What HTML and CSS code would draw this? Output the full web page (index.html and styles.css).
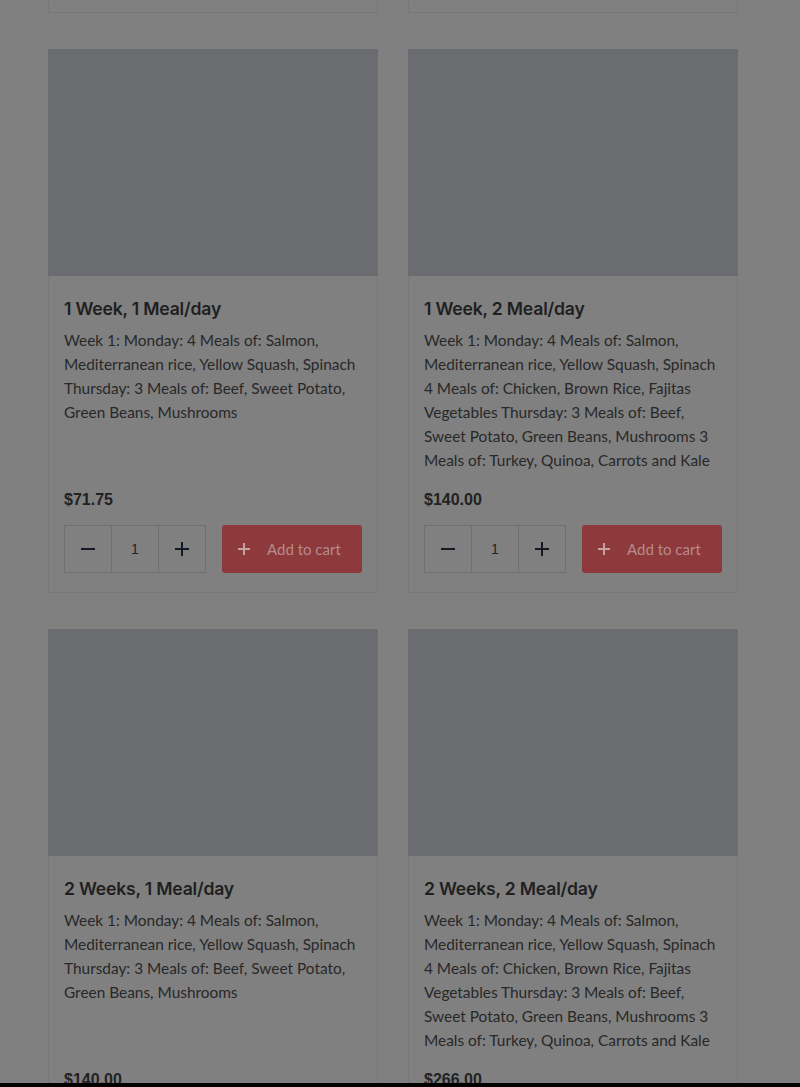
FILE: index.html
```html
<!DOCTYPE html>
<html lang="en">
<head>
<meta charset="utf-8">
<title>Meal plans</title>
<link rel="stylesheet" href="styles.css">
</head>
<body>
<main class="grid">
  <article class="card card-top"></article>
  <article class="card card-top"></article>

  <article class="card">
    <div class="thumb"></div>
    <div class="body">
      <h2 class="title">1 Week, 1 Meal/day</h2>
      <p class="desc">Week 1: Monday: 4 Meals of: Salmon, Mediterranean rice, Yellow Squash, Spinach Thursday: 3 Meals of: Beef, Sweet Potato, Green Beans, Mushrooms</p>
      <div class="price">$71.75</div>
      <div class="actions">
        <div class="qty">
          <button class="qbtn" aria-label="decrease"><svg width="16" height="16" viewBox="0 0 16 16"><path d="M1 8h14" stroke="currentColor" stroke-width="2"/></svg></button>
          <span class="qval">1</span>
          <button class="qbtn" aria-label="increase"><svg width="16" height="16" viewBox="0 0 16 16"><path d="M1 8h14M8 1v14" stroke="currentColor" stroke-width="2"/></svg></button>
        </div>
        <button class="cart"><svg width="12" height="12" viewBox="0 0 12 12"><path d="M0 6h12M6 0v12" stroke="currentColor" stroke-width="2"/></svg><span>Add to cart</span></button>
      </div>
    </div>
  </article>

  <article class="card">
    <div class="thumb"></div>
    <div class="body">
      <h2 class="title">1 Week, 2 Meal/day</h2>
      <p class="desc">Week 1: Monday: 4 Meals of: Salmon, Mediterranean rice, Yellow Squash, Spinach 4 Meals of: Chicken, Brown Rice, Fajitas Vegetables Thursday: 3 Meals of: Beef, Sweet Potato, Green Beans, Mushrooms 3 Meals of: Turkey, Quinoa, Carrots and Kale</p>
      <div class="price">$140.00</div>
      <div class="actions">
        <div class="qty">
          <button class="qbtn" aria-label="decrease"><svg width="16" height="16" viewBox="0 0 16 16"><path d="M1 8h14" stroke="currentColor" stroke-width="2"/></svg></button>
          <span class="qval">1</span>
          <button class="qbtn" aria-label="increase"><svg width="16" height="16" viewBox="0 0 16 16"><path d="M1 8h14M8 1v14" stroke="currentColor" stroke-width="2"/></svg></button>
        </div>
        <button class="cart"><svg width="12" height="12" viewBox="0 0 12 12"><path d="M0 6h12M6 0v12" stroke="currentColor" stroke-width="2"/></svg><span>Add to cart</span></button>
      </div>
    </div>
  </article>

  <article class="card">
    <div class="thumb"></div>
    <div class="body">
      <h2 class="title">2 Weeks, 1 Meal/day</h2>
      <p class="desc">Week 1: Monday: 4 Meals of: Salmon, Mediterranean rice, Yellow Squash, Spinach Thursday: 3 Meals of: Beef, Sweet Potato, Green Beans, Mushrooms</p>
      <div class="price">$140.00</div>
    </div>
  </article>

  <article class="card">
    <div class="thumb"></div>
    <div class="body">
      <h2 class="title">2 Weeks, 2 Meal/day</h2>
      <p class="desc">Week 1: Monday: 4 Meals of: Salmon, Mediterranean rice, Yellow Squash, Spinach 4 Meals of: Chicken, Brown Rice, Fajitas Vegetables Thursday: 3 Meals of: Beef, Sweet Potato, Green Beans, Mushrooms 3 Meals of: Turkey, Quinoa, Carrots and Kale</p>
      <div class="price">$266.00</div>
    </div>
  </article>
</main>
<div class="bottom-bar"></div>
</body>
</html>
```

FILE: styles.css
```css
html, body {
  margin: 0;
  padding: 0;
  background: #808080;
  height: 1087px;
  overflow: hidden;
}
body {
  font-family: Lato, "Liberation Sans", sans-serif;
  color: #262626;
}
.grid {
  display: grid;
  grid-template-columns: 330px 330px;
  column-gap: 30px;
  row-gap: 36px;
  padding: 0 0 0 48px;
  margin-top: -531px;
}
.card {
  box-sizing: border-box;
  height: 544px;
  border: 1px solid #787878;
  border-top: none;
  background: #808080;
  display: flex;
  flex-direction: column;
}
.thumb {
  height: 227px;
  background: #6b6c70;
  flex: none;
  margin: 0 -1px;
}
.body {
  padding: 21px 15px 20px;
  display: flex;
  flex-direction: column;
}
.title {
  margin: 0;
  font-family: Inter, "Liberation Sans", sans-serif;
  font-weight: 600;
  font-size: 17.6px;
  line-height: 24px;
  color: #1f1f1f;
  letter-spacing: -0.2px;
}
.desc {
  margin: 7px 0 0;
  font-size: 15.4px;
  line-height: 24px;
  height: 144px;
  color: #282828;
}
.price {
  margin-top: 16px;
  font-family: "Liberation Sans", Arial, sans-serif;
  font-weight: 700;
  font-size: 16px;
  line-height: 24px;
  color: #222;
}
.actions {
  margin-top: 13px;
  display: flex;
  gap: 16px;
}
.qty {
  display: flex;
  width: 142px;
  height: 48px;
  border: 1px solid #6f6f6f;
  box-sizing: border-box;
}
.qbtn, .qval {
  flex: 1;
  height: 46px;
  display: flex;
  align-items: center;
  justify-content: center;
  box-sizing: border-box;
}
.qbtn {
  background: none;
  border: none;
  padding: 0;
  color: #161a26;
}
.qval {
  border-left: 1px solid #6f6f6f;
  border-right: 1px solid #6f6f6f;
  font-family: "Liberation Sans", Arial, sans-serif;
  font-size: 14px;
  color: #222;
}
.cart {
  width: 140px;
  height: 48px;
  border: none;
  border-radius: 3px;
  background: #8e393c;
  color: #b58b8d;
  display: flex;
  align-items: center;
  gap: 17px;
  padding: 0 0 0 16px;
  font-family: Lato, sans-serif;
  font-size: 15px;
}
.cart svg { color: #c4a2a4; }
.bottom-bar {
  position: fixed;
  left: 0;
  right: 0;
  bottom: 0;
  height: 4px;
  background: #000;
}
```
